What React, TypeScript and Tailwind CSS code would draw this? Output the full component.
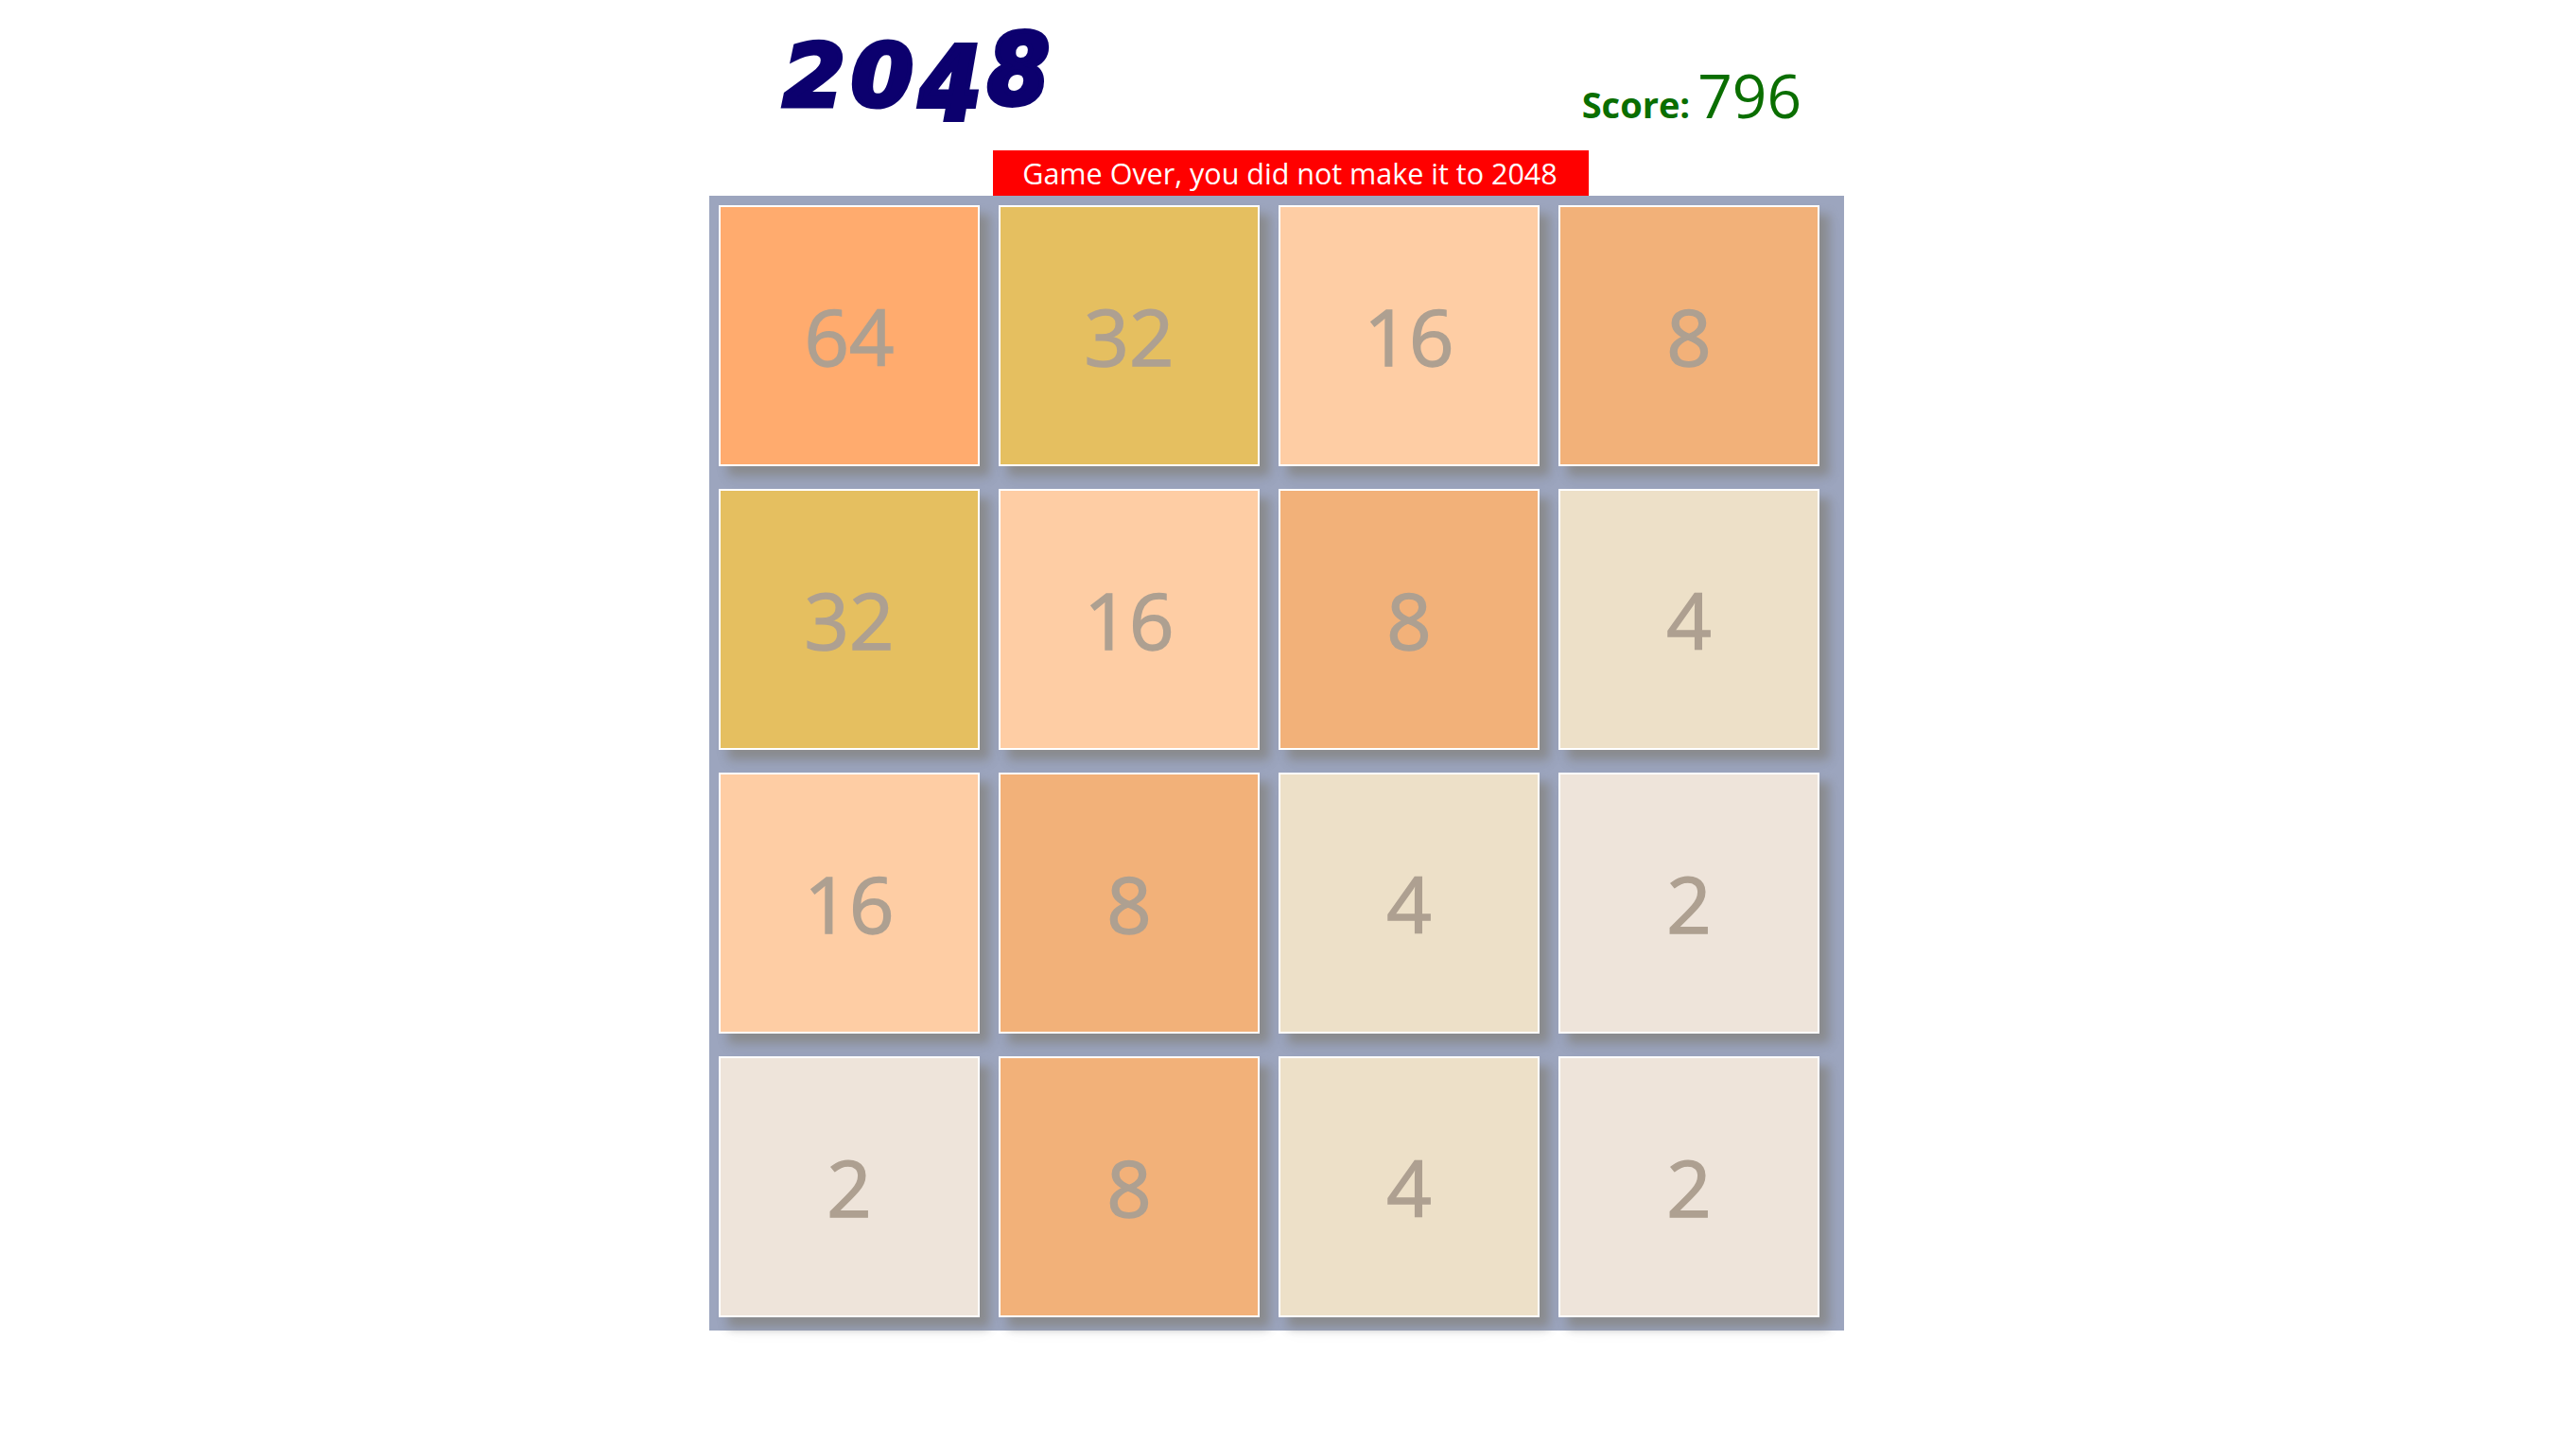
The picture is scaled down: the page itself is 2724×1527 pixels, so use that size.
const board = [
  [64, 32, 16, 8],
  [32, 16, 8, 4],
  [16, 8, 4, 2],
  [2, 8, 4, 2],
];

function tileColor(value: number): string {
  if (value === 64) return "bg-[#ffab6e]";
  if (value === 32) return "bg-[#e5bf60]";
  if (value === 16) return "bg-[#fecda4]";
  if (value === 8) return "bg-[#f2b179]";
  if (value === 4) return "bg-[#ede0c8]";
  return "bg-[#eee4da]";
}

function Tile({ value }: { value: number }) {
  return (
    <div
      className={`flex h-[276px] w-[276px] items-center justify-center border-2 border-white pb-[2px] text-[83px] leading-none text-[#aea091] shadow-[10px_10px_10px_#8a8b8e,10px_14px_20px_rgba(0,0,0,0.04)] [-webkit-text-stroke:1.5px_#aea091] ${tileColor(value)}`}
    >
      {value}
    </div>
  );
}

export default function App() {
  return (
    <div className="min-h-[1527px] bg-white font-['Open_Sans','Noto_Sans',sans-serif]">
      <div className="ml-[750px] flex w-[1200px] flex-col">
        {/* Title and score */}
        <div className="flex h-[159px] items-end justify-between pl-[78px] pr-[45px]">
          <h1 className="mb-[33px] origin-left scale-x-[1.05] font-['DejaVu_Sans',sans-serif] text-[90px] font-bold italic leading-none tracking-[6px] text-[#0c006e] [-webkit-text-stroke:5px_#0c006e]">
            20<span className="inline-block origin-top scale-y-[1.19]">4</span>
            <span className="inline-block origin-bottom scale-y-[1.15]">8</span>
          </h1>
          <div className="mb-[20px] flex items-baseline gap-2 text-[#0a6e00]">
            <span className="text-[38px] font-bold">Score:</span>
            <span className="text-[64px] leading-none">796</span>
          </div>
        </div>

        {/* Game over message */}
        <div className="flex pl-[300px]">
          <div className="flex h-[48px] w-[630px] items-center justify-center bg-[#ff0000] pr-[2px] pt-[2px] text-[30.5px] text-white">
            Game Over, you did not make it to 2048
          </div>
        </div>

        {/* Board */}
        <div className="grid h-[1200px] w-[1200px] grid-cols-[repeat(4,276px)] content-start gap-x-[20px] gap-y-[24px] bg-[#9ca5be] pl-[10px] pt-[10px]">
          {board.flat().map((value, i) => (
            <Tile key={i} value={value} />
          ))}
        </div>
      </div>
    </div>
  );
}
